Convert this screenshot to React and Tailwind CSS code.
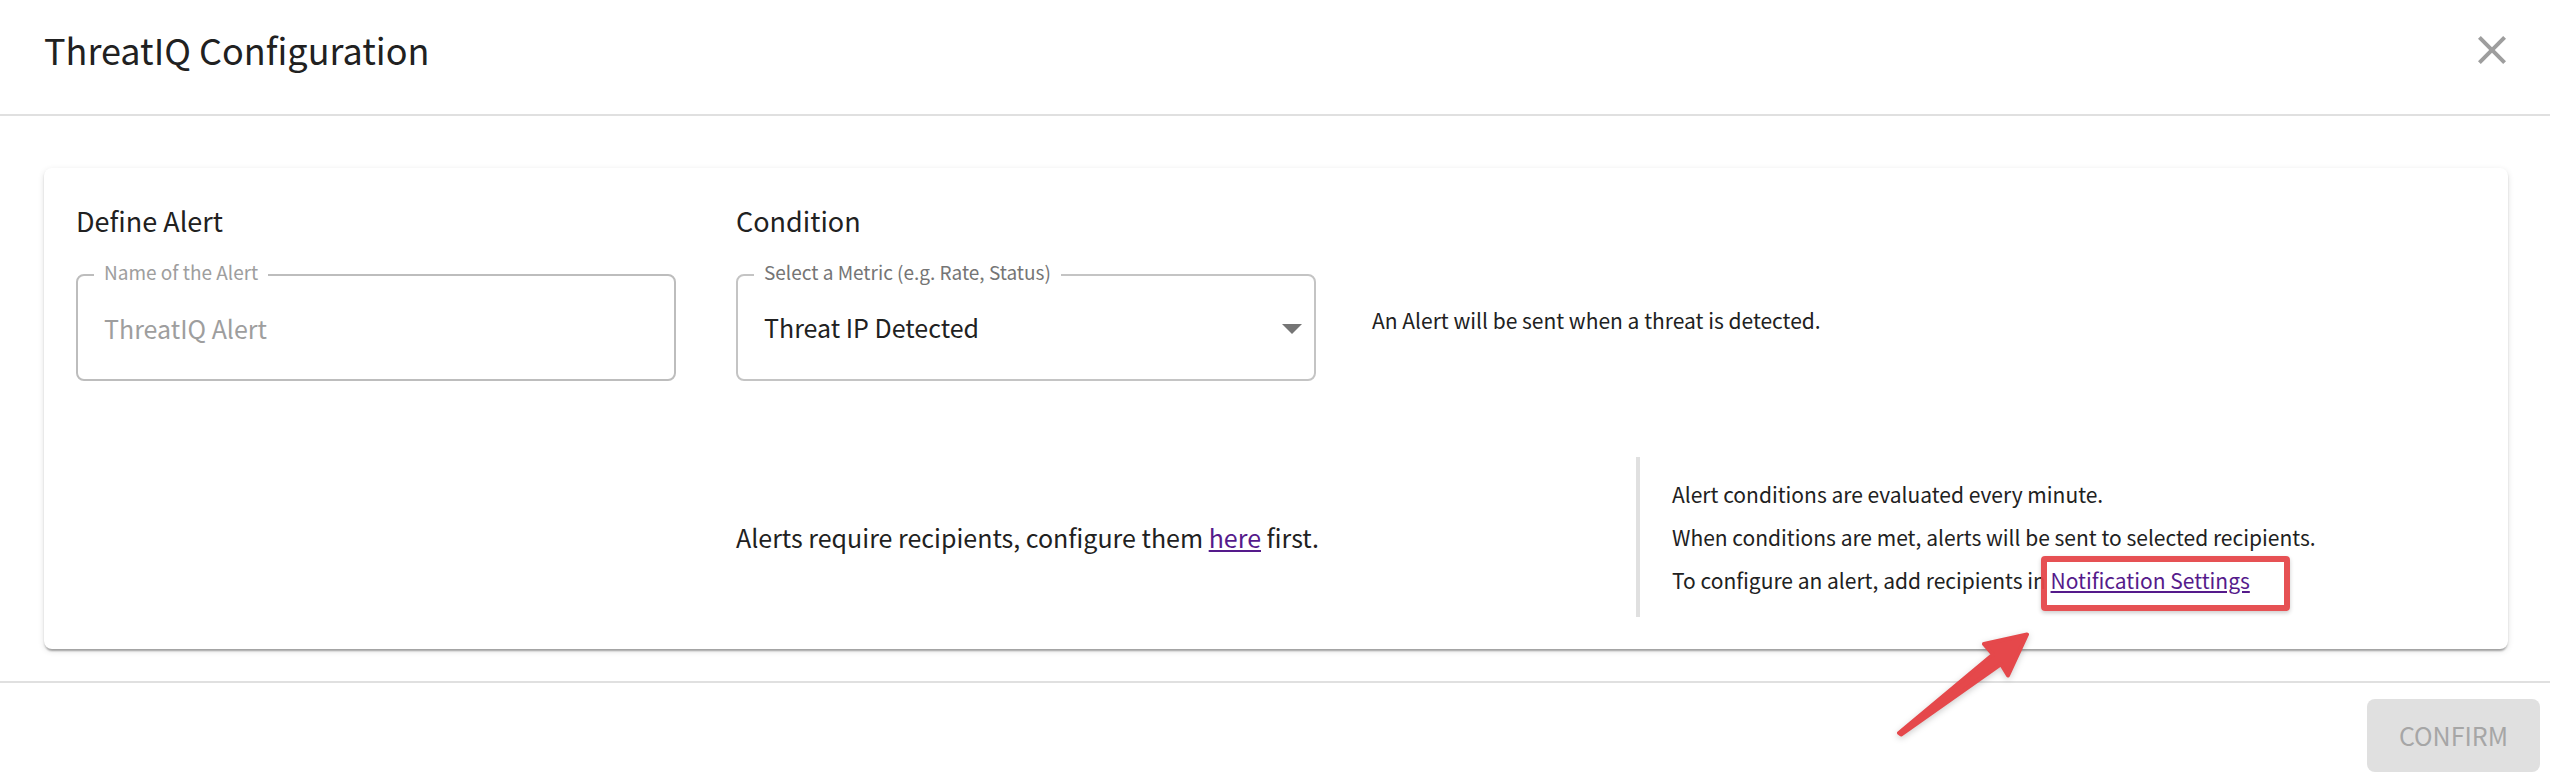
function Header() {
  return (
    <header className="flex items-start justify-between border-b-2 border-[#e0e0e0] pt-[26px] pb-10 pl-11 pr-[34px]">
      <h1 className="text-[36px] leading-[46px]">ThreatIQ Configuration</h1>
      <button type="button" aria-label="Close" className="size-12 text-[#9e9e9e]">
        <svg viewBox="0 0 24 24" className="size-12" fill="currentColor" aria-hidden="true">
          <path d="M19 6.41 17.59 5 12 10.59 6.41 5 5 6.41 10.59 12 5 17.59 6.41 19 12 13.41 17.59 19 19 17.59 13.41 12z" />
        </svg>
      </button>
    </header>
  );
}

function NameField() {
  return (
    <div className="relative">
      <label htmlFor="alert-name" className="absolute left-[18px] -top-[14px] bg-white px-[10px] text-[19px] leading-6 text-[#9e9e9e]">
        Name of the Alert
      </label>
      <input
        id="alert-name"
        type="text"
        disabled
        defaultValue="ThreatIQ Alert"
        className="block h-[107px] w-full rounded-lg border-2 border-[#bdbdbd] bg-white px-[26px] text-[25px] text-[#9e9e9e]"
      />
    </div>
  );
}

function MetricField() {
  return (
    <div className="relative">
      <label htmlFor="metric" className="absolute left-[18px] -top-[14px] bg-white px-[10px] text-[19px] leading-6 text-[#757575]">
        Select a Metric (e.g. Rate, Status)
      </label>
      <select
        id="metric"
        className="block h-[107px] w-full appearance-none rounded-lg border-2 border-[#c4c4c4] bg-white px-[26px] text-[25px]"
      >
        <option>Threat IP Detected</option>
      </select>
      <svg viewBox="0 0 20 10" className="pointer-events-none absolute right-[14px] top-[50px] h-[10px] w-5" fill="#757575" aria-hidden="true">
        <path d="M0 0h20L10 10z" />
      </svg>
    </div>
  );
}

function Pointer() {
  return (
    <svg
      viewBox="0 0 136 108"
      className="pointer-events-none absolute right-[calc(100%+16px)] top-[calc(100%+25px)] h-[108px] w-[136px] drop-shadow-[0_2px_3px_rgba(0,0,0,0.2)]"
      fill="#e5484b"
      stroke="#e5484b"
      strokeWidth="4"
      strokeLinejoin="round"
      aria-hidden="true"
    >
      <path d="M132 4.500 89 14 98 24.500 4 103 6 104.500 106 34 113 45.500z" />
    </svg>
  );
}

function AlertCard() {
  return (
    <section className="ml-11 mr-[42px] mb-8 mt-[52px] rounded-lg bg-white px-8 pb-8 pt-[34px] shadow-[0_4px_2px_-2px_rgba(0,0,0,0.2),0_2px_2px_rgba(0,0,0,0.14),0_2px_6px_rgba(0,0,0,0.12)]">
      <div className="flex">
        <div className="w-[27.5%] pr-[60px]">
          <h2 className="mb-[34px] text-[27px] leading-[38px]">Define Alert</h2>
          <NameField />
        </div>
        <div className="w-[26.5%] pr-14">
          <h2 className="mb-[34px] text-[27px] leading-[38px]">Condition</h2>
          <MetricField />
        </div>
        <p className="flex-1 pt-[102px] text-[21px] leading-8">An Alert will be sent when a threat is detected.</p>
      </div>
      <div className="mt-[76px] flex">
        <p className="ml-[27.5%] w-[37.5%] self-center text-[25px] leading-9">
          Alerts require recipients, configure them{" "}
          <a href="#recipients" className="text-[#551a8b] underline">here</a> first.
        </p>
        <div className="flex-1 border-l-4 border-[#e0e0e0] pt-4 pb-[15px] pl-8 text-[21px] leading-[43px]">
          <p>Alert conditions are evaluated every minute.</p>
          <p>When conditions are met, alerts will be sent to selected recipients.</p>
          <p>
            To configure an alert, add recipients in{" "}
            <span className="relative inline-block">
              <a href="#notifications" className="text-[#551a8b] underline">Notification Settings</a>
              <span className="pointer-events-none absolute -bottom-[9px] -left-[10px] -right-[40px] -top-[3px] rounded border-[6px] border-[#e5484b]/95 shadow-[0_2px_4px_rgba(0,0,0,0.2)]">
                <Pointer />
              </span>
            </span>
          </p>
        </div>
      </div>
    </section>
  );
}

export default function App() {
  return (
    <main className="bg-white font-['Noto_Sans_CJK_SC',sans-serif] text-[#212121]">
      <Header />
      <AlertCard />
      <footer className="flex justify-end border-t-2 border-[#e0e0e0] pb-3 pr-[10px] pt-4">
        <button type="button" disabled className="h-[73px] rounded-lg bg-[#e0e0e0] px-8 text-[25px] text-[#a6a6a6]">
          CONFIRM
        </button>
      </footer>
    </main>
  );
}
